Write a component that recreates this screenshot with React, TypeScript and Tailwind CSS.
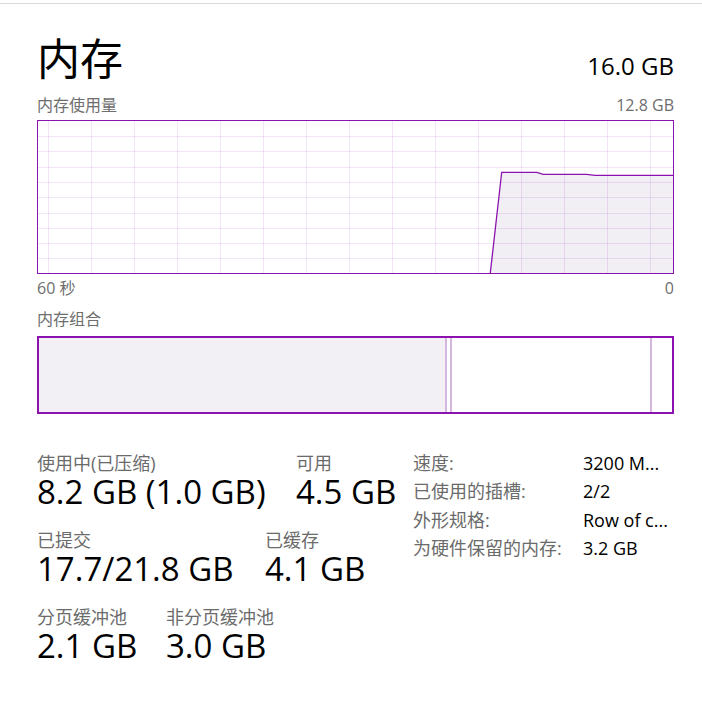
import React from "react";

const PURPLE = "#8b12ae";

function UsageChart() {
  const W = 635;
  const H = 152;
  const vLines: number[] = [];
  for (let x = 10; x < W; x += 43) vLines.push(x + 0.5);
  const hLines: number[] = [];
  for (let k = 1; k < 10; k++) hLines.push(Math.round(15.3 * k - 0.3) + 0.5);
  const pts: [number, number][] = [
    [452.3, 152],
    [463.7, 51.3],
    [498.7, 51.3],
    [505.3, 53.3],
    [548.7, 53.3],
    [557, 54.3],
    [635, 54.3],
  ];
  const line = pts.map((p) => p.join(",")).join(" ");
  const area = [...pts, [635, 152] as [number, number]].map((p) => p.join(",")).join(" ");
  return (
    <div className="w-[637px] h-[154px] border border-[#8b12ae] bg-white">
      <svg width={W} height={H} viewBox={`0 0 ${W} ${H}`} className="block">
        <polygon points={area} fill="#f1eff4" />
        {vLines.map((x) => (
          <line key={"v" + x} x1={x} y1={0} x2={x} y2={H} stroke={PURPLE} strokeOpacity={0.11} strokeWidth={1} />
        ))}
        {hLines.map((y) => (
          <line key={"h" + y} x1={0} y1={y} x2={W} y2={y} stroke={PURPLE} strokeOpacity={0.11} strokeWidth={1} />
        ))}
        <polyline points={line} fill="none" stroke={PURPLE} strokeWidth={1.3} />
      </svg>
    </div>
  );
}

function CompositionBar() {
  return (
    <div className="w-[637px] h-[78px] border-2 border-[#8b12ae] flex bg-white">
      <div className="w-[406px] h-full bg-[#f2f0f4]" />
      <div className="w-[2px] h-full bg-[#d4b6de]" />
      <div className="w-[3px] h-full bg-white" />
      <div className="w-[2px] h-full bg-[#d4b6de]" />
      <div className="flex-1 h-full bg-white" />
      <div className="w-[2px] h-full bg-[#d4b6de]" />
      <div className="w-[20px] h-full bg-white" />
    </div>
  );
}

function Stat({ label, value, w }: { label: string; value: string; w?: string }) {
  return (
    <div className={w ?? ""}>
      <div className="text-[18px] leading-[18px] text-[#6b6b6b] whitespace-nowrap">{label}</div>
      <div className="text-[33px] leading-[40px] text-black whitespace-nowrap">{value}</div>
    </div>
  );
}

export default function App() {
  return (
    <div className="w-[702px] h-[718px] bg-white font-['Open_Sans','Noto_Sans_CJK_SC',sans-serif] overflow-hidden">
      <div className="h-[3px]" />
      <div className="h-px bg-[#dadada]" />
      <div className="pl-[37px] pr-[28px]">
        <div className="mt-[33px] flex justify-between items-start">
          <div className="text-[43px] leading-[43px] text-black">内存</div>
          <div className="mt-[17px] text-[24px] leading-[24px] text-black">16.0 GB</div>
        </div>
        <div className="mt-[17px] flex justify-between text-[16px] leading-[16px] text-[#6e6e6e]">
          <span>内存使用量</span>
          <span>12.8 GB</span>
        </div>
        <div className="mt-[7px]">
          <UsageChart />
        </div>
        <div className="mt-[6px] flex justify-between text-[16px] leading-[16px] text-[#6e6e6e]">
          <span>60 秒</span>
          <span>0</span>
        </div>
        <div className="mt-[15px] text-[16px] leading-[16px] text-[#6e6e6e]">内存组合</div>
        <div className="mt-[9px]">
          <CompositionBar />
        </div>
        <div className="mt-[35px] flex items-start">
          <div className="w-[376px] pt-[5px]">
            <div className="flex">
              <Stat w="w-[259px]" label="使用中(已压缩)" value="8.2 GB (1.0 GB)" />
              <Stat label="可用" value="4.5 GB" />
            </div>
            <div className="mt-[19px] flex">
              <Stat w="w-[228px]" label="已提交" value="17.7/21.8 GB" />
              <Stat label="已缓存" value="4.1 GB" />
            </div>
            <div className="mt-[19px] flex">
              <Stat w="w-[129px]" label="分页缓冲池" value="2.1 GB" />
              <Stat label="非分页缓冲池" value="3.0 GB" />
            </div>
          </div>
          <div className="grid grid-cols-[170px_1fr] text-[18px] leading-[28.4px] whitespace-nowrap">
            <div className="text-[#6b6b6b]">速度:</div>
            <div className="text-black">3200 M...</div>
            <div className="text-[#6b6b6b]">已使用的插槽:</div>
            <div className="text-black">2/2</div>
            <div className="text-[#6b6b6b]">外形规格:</div>
            <div className="text-black">Row of c...</div>
            <div className="text-[#6b6b6b]">为硬件保留的内存:</div>
            <div className="text-black">3.2 GB</div>
          </div>
        </div>
      </div>
    </div>
  );
}
